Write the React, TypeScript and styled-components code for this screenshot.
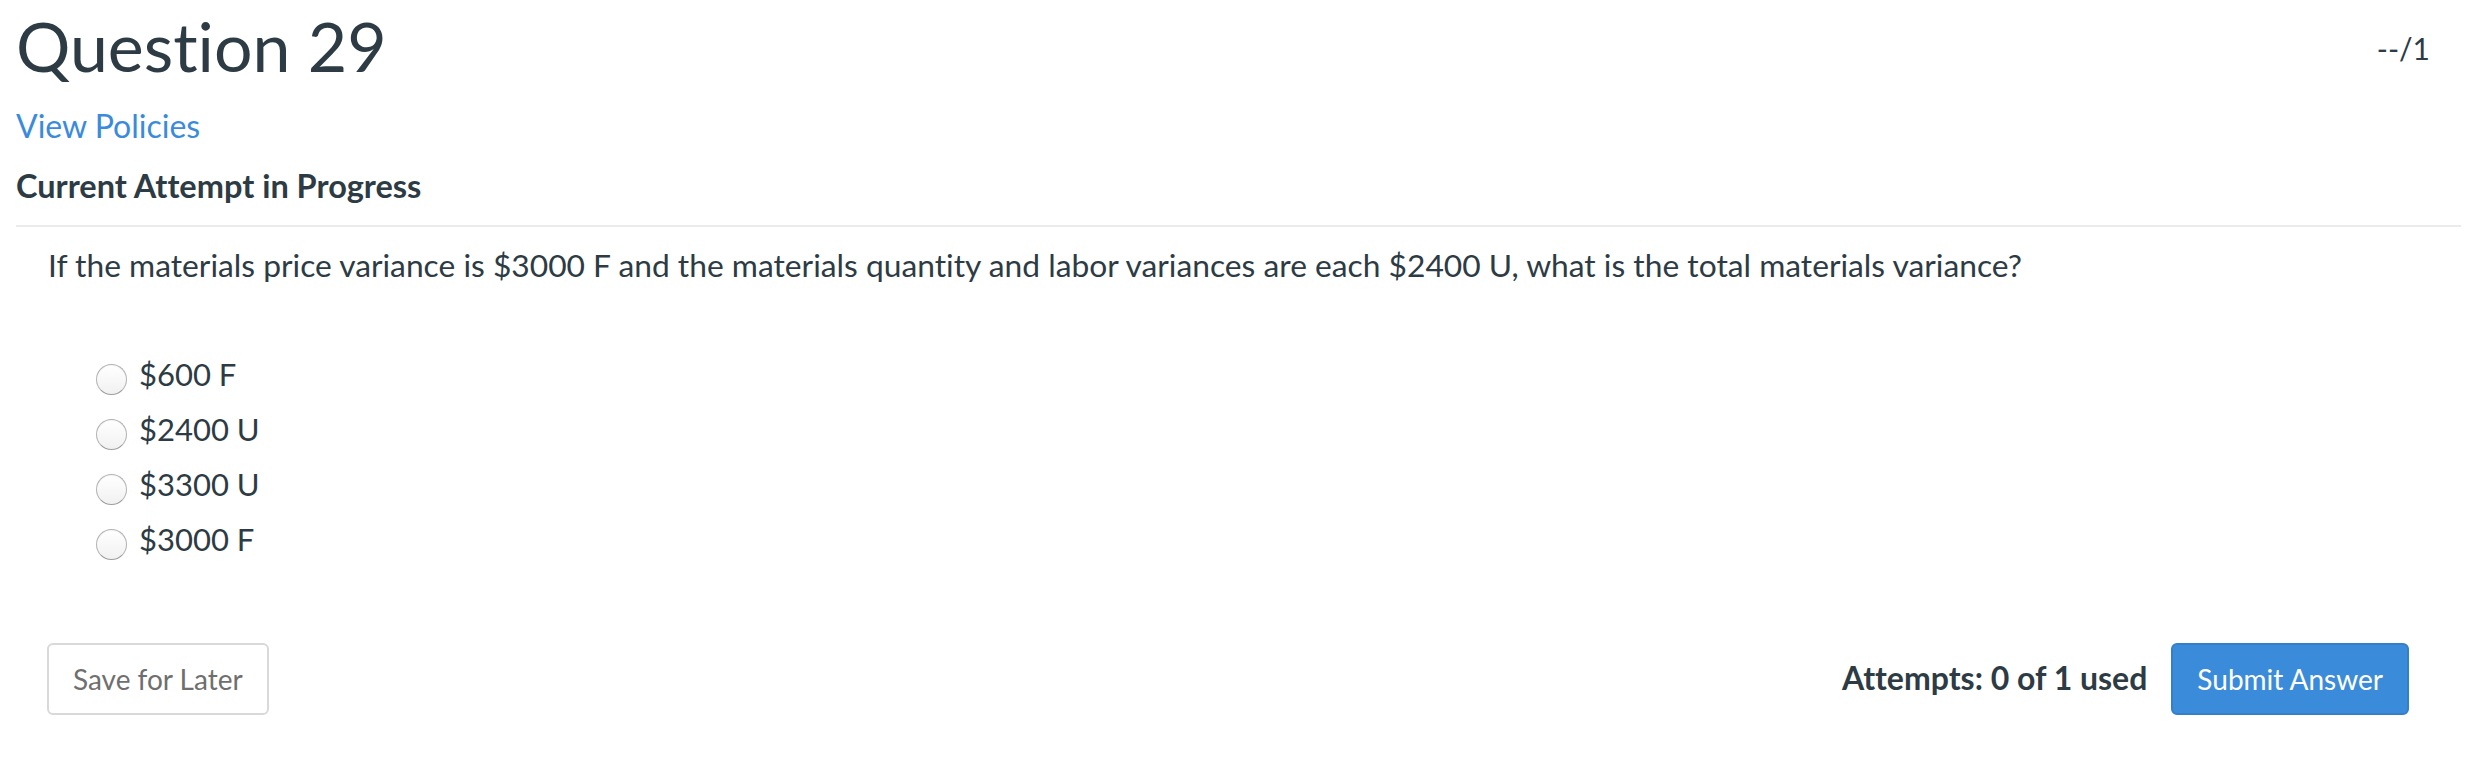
import React from "react";
import styled, { createGlobalStyle } from "styled-components";

const GlobalStyle = createGlobalStyle`
  html, body {
    margin: 0;
    padding: 0;
    background: #ffffff;
  }
  body {
    font-family: Lato, "Open Sans", "Liberation Sans", sans-serif;
    color: #2d3b45;
    font-variant-ligatures: none;
    font-feature-settings: "liga" 0, "clig" 0;
  }
  * { box-sizing: border-box; }
`;

const Page = styled.main`
  padding: 0 23px 0 16px;
`;

const Header = styled.header`
  border-bottom: 2px solid #ebebeb;
  padding-bottom: 20.5px;
`;

const TitleRow = styled.div`
  display: flex;
  justify-content: space-between;
  align-items: flex-start;
`;

const Title = styled.h1`
  margin: 0;
  padding-top: 5px;
  font-size: 68px;
  line-height: 82px;
  font-weight: 400;
  color: #2d3b45;
`;

const Score = styled.div`
  margin-top: 30px;
  padding-right: 31px;
  font-size: 30px;
  line-height: 36px;
  color: #2d3b45;
`;

const PolicyLink = styled.a`
  display: block;
  margin-top: 20px;
  font-size: 32px;
  line-height: 38px;
  color: #3a8bdc;
  text-decoration: none;
  cursor: pointer;
`;

const AttemptHeading = styled.h2`
  margin: 22px 0 0;
  font-size: 32.5px;
  line-height: 37px;
  font-weight: 700;
  color: #2d3b45;
`;

const Body = styled.section`
  padding: 20.5px 0 0 32px;
`;

const QuestionText = styled.p`
  margin: 0;
  font-size: 31.75px;
  line-height: 37px;
  color: #2d3b45;
`;

const Options = styled.div`
  display: flex;
  flex-direction: column;
  gap: 16.67px;
  margin-top: 72px;
  padding-left: 48px;
`;

const OptionRow = styled.label`
  display: flex;
  align-items: flex-start;
  gap: 12px;
  font-size: 31px;
  line-height: 37px;
  color: #2d3b45;
  cursor: pointer;
`;

const Radio = styled.input.attrs({ type: "radio" })`
  appearance: none;
  -webkit-appearance: none;
  margin: 7.5px 0 0;
  width: 31px;
  height: 31px;
  flex: none;
  border-radius: 50%;
  border: 1.5px solid #b3b3b3;
  border-bottom-color: #9d9d9d;
  background: linear-gradient(#ffffff, #f1f1f1);
  box-shadow: inset 0 1px 1px rgba(0, 0, 0, 0.04);
`;

const Footer = styled.footer`
  display: flex;
  justify-content: space-between;
  align-items: baseline;
  margin-top: 83.5px;
  padding: 0 52px 0 31px;
`;

const Actions = styled.div`
  display: flex;
  align-items: baseline;
  gap: 24px;
`;

const Attempts = styled.span`
  font-size: 32px;
  line-height: 37px;
  font-weight: 700;
  color: #2d3b45;
`;

const Button = styled.button<{ $primary?: boolean }>`
  font-family: Lato, "Open Sans", "Liberation Sans", sans-serif;
  font-variant-ligatures: none;
  font-size: 28px;
  line-height: 36px;
  padding: 16px 24px;
  border-radius: 6px;
  border: 2px solid ${(p) => (p.$primary ? "#357fc9" : "#d9d9d9")};
  background: ${(p) => (p.$primary ? "#3b8bdb" : "#ffffff")};
  color: ${(p) => (p.$primary ? "#ffffff" : "#6f6f6f")};
  cursor: pointer;
`;

const answers = ["$600 F", "$2400 U", "$3300 U", "$3000 F"];

export default function App() {
  return (
    <>
      <GlobalStyle />
      <Page>
        <Header>
          <TitleRow>
            <Title>Question 29</Title>
            <Score>--/1</Score>
          </TitleRow>
          <PolicyLink>View Policies</PolicyLink>
          <AttemptHeading>Current Attempt in Progress</AttemptHeading>
        </Header>
        <Body>
          <QuestionText>
            If the materials price variance is $3000 F and the materials quantity and labor
            variances are each $2400 U, what is the total materials variance?
          </QuestionText>
          <Options>
            {answers.map((a) => (
              <OptionRow key={a}>
                <Radio name="answer" />
                <span>{a}</span>
              </OptionRow>
            ))}
          </Options>
        </Body>
        <Footer>
          <Button>Save for Later</Button>
          <Actions>
            <Attempts>Attempts: 0 of 1 used</Attempts>
            <Button $primary>Submit Answer</Button>
          </Actions>
        </Footer>
      </Page>
    </>
  );
}
